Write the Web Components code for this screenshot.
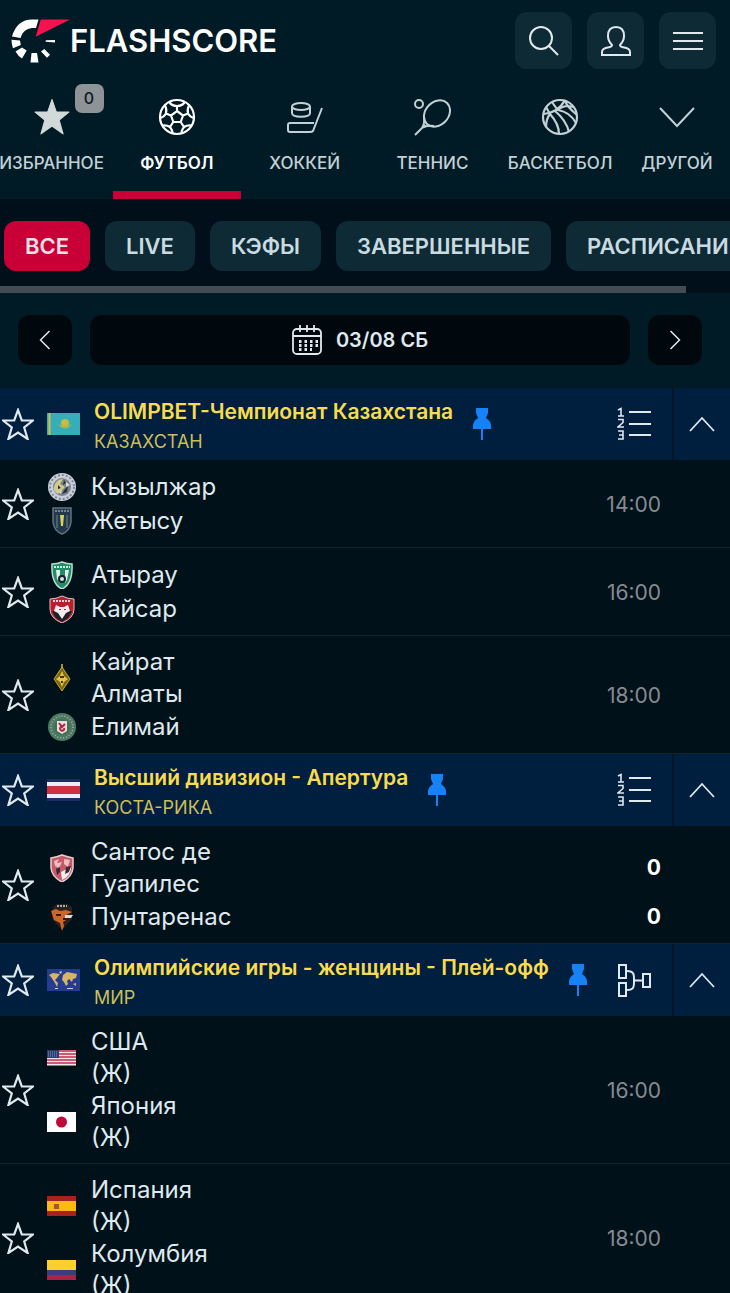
<!DOCTYPE html>
<html lang="ru">
<head>
<meta charset="utf-8">
<meta name="viewport" content="width=device-width, initial-scale=1">
<title>Flashscore</title>
<style>
  :root {
    --main-font: Inter, "Open Sans", "Noto Sans", sans-serif;
    --bar-color: #001b25;
    --page-color: #00111a;
    --league-color: #001e3e;
    --button-color: #0e2a35;
    --accent-color: #c80037;
    --font-color: #dfe9ee;
    --title-color: #f8dc4e;
    --line-color: #14232c;
  }
  body {
    margin: 0;
    overflow-x: hidden;
    background: var(--page-color);
    color: var(--font-color);
    font-family: var(--main-font);
  }
</style>
</head>
<body>
<site-header></site-header>

<sport-nav>
  <sport-tab icon="starFull" badge="0" class="first">ИЗБРАННОЕ</sport-tab>
  <sport-tab icon="football" active>ФУТБОЛ</sport-tab>
  <sport-tab icon="hockey">ХОККЕЙ</sport-tab>
  <sport-tab icon="tennis">ТЕННИС</sport-tab>
  <sport-tab icon="basketball">БАСКЕТБОЛ</sport-tab>
  <sport-tab icon="down">ДРУГОЙ</sport-tab>
</sport-nav>

<filter-bar>
  <filter-pill active>ВСЕ</filter-pill>
  <filter-pill>LIVE</filter-pill>
  <filter-pill>КЭФЫ</filter-pill>
  <filter-pill>ЗАВЕРШЕННЫЕ</filter-pill>
  <filter-pill>РАСПИСАНИЕ</filter-pill>
</filter-bar>

<date-switch>03/08 СБ</date-switch>

<main>
  <league-header flag="kazakhstan" table="list">OLIMPBET-Чемпионат Казахстана<span slot="country">КАЗАХСТАН</span></league-header>
  <match-row time="14:00">
    <team-line crest="kyzylzhar">Кызылжар</team-line>
    <team-line crest="zhetysu">Жетысу</team-line>
  </match-row>
  <match-row time="16:00">
    <team-line crest="atyrau">Атырау</team-line>
    <team-line crest="kaisar">Кайсар</team-line>
  </match-row>
  <match-row time="18:00">
    <team-line crest="kairat">Кайрат<br>Алматы</team-line>
    <team-line crest="elimai">Елимай</team-line>
  </match-row>

  <league-header flag="costarica" table="list">Высший дивизион - Апертура<span slot="country">КОСТА-РИКА</span></league-header>
  <match-row>
    <team-line crest="santos" score="0">Сантос де<br>Гуапилес</team-line>
    <team-line crest="puntarenas" score="0">Пунтаренас</team-line>
  </match-row>

  <league-header flag="world" table="bracket">Олимпийские игры - женщины - Плей-офф<span slot="country">МИР</span></league-header>
  <match-row time="16:00">
    <team-line crest="usa">США<br>(Ж)</team-line>
    <team-line crest="japan">Япония<br>(Ж)</team-line>
  </match-row>
  <match-row time="18:00">
    <team-line crest="spain">Испания<br>(Ж)</team-line>
    <team-line crest="colombia">Колумбия<br>(Ж)</team-line>
  </match-row>
</main>

<script>
"use strict";

// [width, height, viewBox, markup]
const line = 'fill="none" stroke="currentColor"';
const starPath = "M16 2 L19.8 12.3 L31 12.5 L22.2 19.5 L25.6 31 L16 24.5 L6.4 31 L9.8 19.5 L1 12.5 L12.2 12.3 Z";
const shield = "M2 4 Q8 4 14 1 Q20 4 26 4 V14 Q26 23 14 28 Q2 23 2 14 Z";

const icons = {
  logo: [60, 46, "0 0 60 46", `
    <path fill="#fff" d="M2 18.5 Q7 1.5 22 1.5 H28.5 L26 10 H22 Q13 11 10.5 20Z M1.5 21.8 L10 22.5 L10.8 27 L3 30.3 Q1.5 27 1.5 21.8Z M5.5 33.5 L12 29.5 L16.7 32.5 L12 40.5 Q8 38 5.5 33.5Z M21.5 35 H27 L28.5 44.5 H20.5Z M31 33.5 L34.3 31 L40 36.8 L37 39.8Z M35.7 22.3 L45 22 V24.4 L35.7 23.8Z"/>
    <path fill="#f5124f" d="M30.7 1.5 H60 L25.7 18.8 Z"/>`],
  search: [32, 32, "0 0 32 32", `<g ${line} stroke-width="2"><circle cx="13" cy="13" r="11"/><path d="M21 21 L30 30"/></g>`],
  user: [32, 32, "0 0 32 32", `<path ${line} stroke-width="2" d="M16 2 C10 2 8 6 8 11 C8 15 10 18 12 20 C12 24 2 21 2 27 V30 H30 V27 C30 21 20 24 20 20 C22 18 24 15 24 11 C24 6 22 2 16 2Z"/>`],
  menu: [30, 22, "0 0 30 22", `<path ${line} stroke-width="2" d="M0 3 H30 M0 11 H30 M0 19 H30"/>`],
  starFull: [36, 36, "0 0 32 32", `<path fill="#d2d9d9" stroke="#d2d9d9" stroke-linejoin="round" d="M16 .5 L19.8 11.5 L31 11.6 L22.4 18.7 L25.8 31 L16 24 L6.2 31 L9.6 18.7 L1 11.6 L12.2 11.5 Z"/>`],
  football: [38, 38, "0 0 38 38", `<g ${line} stroke-width="2.2"><circle cx="19" cy="19" r="17"/><path d="M19 13 L25 17.5 L22.7 24 H15.3 L13 17.5Z M19 13 V8 M25 17.5 L30 15.5 M22.7 24 L26 29 M15.3 24 L12 29 M13 17.5 L8 15.5 M11.5 4.5 Q14 8 19 8 Q24 8 26.5 4.5 M31 7.5 Q29 11 30 15.5 Q32 19 36 20 M33.5 27.5 Q29 27 26 29 Q23.5 32 23.5 35.5 M14.5 35.5 Q14.5 32 12 29 Q9 27 4.5 27.5 M2 20 Q6 19 8 15.5 Q9 11 7 7.5"/></g>`],
  hockey: [36, 36, "0 0 36 36", `<g ${line} stroke-width="2"><ellipse cx="14" cy="7.5" rx="9" ry="3.5"/><path d="M5 7.5 V14 C5 19 23 19 23 14 V7.5 M35 9 L26 32 Q25 33 23 33 H3 Q1 33 1 31 V26 Q1 24 3 24 H27"/></g>`],
  tennis: [38, 38, "0 0 38 38", `<g ${line} stroke-width="2"><circle cx="6" cy="6" r="4"/><ellipse cx="24" cy="15.5" rx="14.5" ry="11.5" transform="rotate(-46 24 15.5)"/><path d="M11 19 Q12 25 9 30 Q14 27 21 28 M9 30 L2 37 M10 26 L13 29"/></g>`],
  basketball: [38, 38, "0 0 38 38", `<g ${line} stroke-width="2.2"><circle cx="19" cy="19" r="17"/><path d="M2 16 Q17 15 24 2 M11 4 Q15 10 17 12 Q29 14 35 25 M14 13 Q25 22 28 34 M9 16 Q18 26 18 36 M9 16 Q5 21 5 29 M5 9 L9 16 M17 12 Q24 6 32 9 M24 2 Q25 8 36 17"/></g>`],
  down: [36, 36, "0 0 36 36", `<path ${line} stroke-width="2" d="M1 9 L18 27 L35 9"/>`],
  prev: [12, 20, "0 0 12 20", `<path ${line} stroke-width="1.5" d="M10.5 1 L1.5 10 L10.5 19"/>`],
  next: [12, 20, "0 0 12 20", `<path ${line} stroke-width="1.5" d="M1.5 1 L10.5 10 L1.5 19"/>`],
  calendar: [30, 30, "0 0 30 30", `<g ${line} stroke-width="1.8"><rect x="1" y="4" width="28" height="25" rx="4"/><path d="M1 11 H29 M8 0 V7 M15 0 V7 M22 0 V7"/><path stroke-width="3" stroke-dasharray="2.5 3" d="M7 16.5 H26 M7 20.5 H26 M7 24.5 H20"/></g>`],
  star: [32, 32, "0 0 32 32", `<path ${line} stroke-width="2.2" d="${starPath}"/>`],
  up: [26, 16, "0 0 26 16", `<path ${line} stroke-width="1.8" d="M1 15 L13 2 L25 15"/>`],
  pin: [20, 34, "0 0 20 34", `<path fill="#1583f5" d="M4 1 H16 V6 L14 11 Q19 14 19 19 V22 H1 V19 Q1 14 6 11 L4 6Z"/><path stroke="#1583f5" stroke-width="2" d="M10 22 V33"/>`],
  list: [34, 34, "0 0 34 34", `<g ${line} stroke-width="2"><path d="M12 5 H34 M12 17 H34 M12 28 H34"/><path stroke-width="1.6" d="M1 3 L4 1.5 V9 M1 9 H7 M1 12.5 H6 V15.5 L1 20 H7 M1 24 H6 V32 H1 M2 28 H6"/></g>`],
  bracket: [34, 34, "0 0 34 34", `<g ${line} stroke-width="2"><path d="M2 2 H9 V15 H2Z M2 20 H9 V33 H2Z M26 11 H33 V24 H26Z M10 8 C18 8 17 13 17 17.5 C17 22 18 27 10 27 M17 17.5 H26"/></g>`],

  kazakhstan: [33, 22, "0 0 33 22", `<path fill="#35aeb9" d="M0 0H33V22H0Z"/><path stroke="#d0c04a" stroke-width="2" d="M2.5 0V22"/><circle cx="18" cy="10" r="4" fill="#c5bd45"/><path d="M11 11 Q18 20 25 11 Q18 15 11 11" fill="#a9b74c"/>`],
  costarica: [33, 22, "0 0 33 22", `<path fill="#1c2c66" d="M0 0H33V22H0Z"/><path fill="#f1ecf3" d="M0 3H33V19H0Z"/><path fill="#cc3140" d="M0 7H33V15H0Z"/>`],
  world: [33, 22, "0 0 33 22", `<path fill="#253c91" d="M0 0H33V22H0Z"/><path fill="#d8b468" d="M2 6 L6 4 L13 5 L10 9 L8 11 L11 14 L10 18 L8 14 L6 11 L4 8Z M16 6 L20 3 L30 5 L29 9 L26 10 L25 13 L22 10 L20 12 L21 15 L19 17 L17 13 L15 11Z M26 15 L29 14 L29 17Z"/><path fill="#d8d7dc" d="M12 3 L15 2 L14 5Z M8 19H11V20H8Z M20 19H26V20H20Z"/>`],
  usa: [29, 16, "0 0 29 16", `<path fill="#eee7ed" d="M0 0H29V16H0Z"/><path stroke="#bf3049" stroke-width="1.5" d="M0 1H29M0 4H29M0 7H29M0 10H29M0 13H29M0 16H29"/><path fill="#273d70" d="M0 0H12V8H0Z"/><path stroke="#8492b7" stroke-dasharray="1 1" d="M1 2H11M1 4H11M1 6H11"/>`],
  japan: [29, 20, "0 0 29 20", `<path fill="#fff" d="M0 0H29V20H0Z"/><circle cx="14.5" cy="10" r="5.5" fill="#bd0838"/>`],
  spain: [29, 20, "0 0 29 20", `<path fill="#a9201d" d="M0 0H29V20H0Z"/><path fill="#fbb916" d="M0 5H29V15H0Z"/><path fill="#a6582b" d="M7 8H12V13H7Z"/>`],
  colombia: [29, 20, "0 0 29 20", `<path fill="#f8d130" d="M0 0H29V10H0Z"/><path fill="#3d3b7b" d="M0 10H29V15H0Z"/><path fill="#a92443" d="M0 15H29V20H0Z"/>`],

  kyzylzhar: [28, 28, "0 0 28 28", `<circle cx="14" cy="14" r="14" fill="#c9cfda"/><circle cx="14" cy="14" r="12" fill="none" stroke="#7b8698" stroke-width="2" stroke-dasharray="2 2"/><circle cx="14" cy="14" r="9" fill="#7d8288"/><path fill="#d1cc8b" d="M6 14 Q8 6 15 6 L12 11 L17 14 L10 21 Q5 18 6 14Z"/><path fill="#26313f" d="M16 7 L18 10 L15 12Z M20 13 L19 19 L14 21 L17 16Z M10 12 L13 15 L10 16Z"/><path fill="#d8dade" d="M18 9 L22 12 L18 14Z M11 19 L14 17 L13 21Z"/>`],
  zhetysu: [28, 28, "0 0 28 28", `<path fill="#20394b" stroke="#65727b" stroke-width="1.5" d="M5 1 H23 V15 Q22 24 14 27 Q6 24 5 15Z"/><path stroke="#77858f" stroke-width="2" stroke-dasharray="2 1" d="M7 4H21"/><path stroke="#718690" d="M9 8V21M19 8V21"/><path fill="#d9d35e" d="M12 8H16L15 19H13Z"/>`],
  atyrau: [28, 28, "0 0 28 28", `<path fill="#248b68" stroke="#b8ddcb" stroke-width="1.5" d="M4 3 Q9 3 14 1 Q19 3 24 3 Q25 23 14 28 Q3 23 4 3Z"/><path stroke="#d8eee3" stroke-width="2" stroke-dasharray="2 1" d="M6 6H22"/><path fill="#dfeee6" d="M8 9H12V22L9 18Z M17 9H21L19 19L17 22Z"/><circle cx="14" cy="18" r="4" fill="#17232b"/><circle cx="14" cy="18" r="2" fill="#d6e5df"/>`],
  kaisar: [28, 28, "0 0 28 28", `<path fill="#b91e2c" stroke="#e4c4c7" d="${shield}"/><path stroke="#ebd5d4" stroke-width="2" stroke-dasharray="2 1" d="M5 6H23"/><path fill="#1d2028" d="M4 16H24L20 23L14 27L8 23Z"/><path fill="#f2eef0" d="M8 10 L12 12 H16 L20 10 L22 16 L18 18 L14 24 L10 18 L6 16Z"/><path fill="#b91e2c" d="M11 14H13V15H11Z M16 14H18V15H16Z"/>`],
  kairat: [28, 28, "0 0 28 28", `<path fill="#7f6617" stroke="#c8a52a" d="M14 3 L22 15 L14 27 L6 15Z"/><path stroke="#d8bd48" stroke-width="1.5" d="M14 0V4"/><path fill="#e4c345" d="M14 7 L16 12 L20 15 L16 18 L14 23 L12 18 L8 15 L12 12Z"/><path fill="#3e3715" d="M12 12H16V14H12Z M13 17H15V19H13Z"/>`],
  elimai: [28, 28, "0 0 28 28", `<circle cx="14" cy="14" r="14" fill="#4d7962"/><circle cx="14" cy="14" r="11" fill="none" stroke="#a3bca9" stroke-width="1.5" stroke-dasharray="1 2"/><circle cx="14" cy="14" r="8" fill="#426e57"/><path fill="#e9dfdf" d="M9 8H19V18L14 21L9 18Z"/><path fill="none" stroke="#b8233c" stroke-width="2" d="M11 10 L14 14 L17 11 M13 14 A2 2 0 1 0 16 15"/>`],
  santos: [28, 28, "0 0 28 28", `<path fill="#c75a66" stroke="#e8cdd1" stroke-width="1.5" d="M3 4 Q9 3 14 1 Q20 3 25 4 V14 Q24 23 14 28 Q4 23 3 14Z"/><path fill="#edbec3" d="M6 7 L11 5 L9 9 L14 8 L11 14 L7 12Z M16 5 L22 6 L20 13 L16 10Z"/><path fill="#f2eef0" d="M13 18 L23 13 Q23 22 14 26Z"/><path fill="#362a38" d="M8 15L12 13L12 18L9 21Z M18 13L23 12L21 18L17 20Z"/>`],
  puntarenas: [28, 28, "0 0 28 28", `<path fill="#2a211f" d="M5 4 L9 1 H19 L24 4 V16 L14 27 L4 16Z"/><path stroke="#aaa" stroke-width="2" stroke-dasharray="2 1" d="M9 3H19"/><path fill="#cf6427" d="M3 8 L8 6 L12 8 L18 7 L24 9 L18 12 L20 16 L15 19 L16 23 L14 28 L12 20 L6 17Z"/><path fill="#dedbd7" d="M17 12H25L23 15H17Z"/><path fill="#291d1c" d="M8 11H13V13H8Z M15 15H20V17H15Z"/>`],
};

const icon = (name) => {
  const [w, h, box, body] = icons[name];
  return `<svg width="${w}" height="${h}" viewBox="${box}" aria-hidden="true">${body}</svg>`;
};

const resetStyles = `
  * { box-sizing: border-box; }
  svg { display: block; flex: none; }
  button {
    display: flex;
    align-items: center;
    justify-content: center;
    margin: 0;
    padding: 0;
    border: 0;
    background: none;
    color: inherit;
    font: inherit;
    cursor: pointer;
  }
  a { color: inherit; text-decoration: none; }
`;

class BaseElement extends HTMLElement {
  connectedCallback() {
    if (this.shadowRoot) return;
    this.attachShadow({ mode: "open" }).innerHTML = `<style>${resetStyles}</style>${this.render()}`;
  }
}

class SiteHeader extends BaseElement {
  render() {
    return `
    <style>
      :host { display: block; background: var(--bar-color); }
      header {
        display: flex;
        align-items: center;
        justify-content: space-between;
        padding: 12px 14px 12px 10px;
      }
      .logo {
        display: flex;
        align-items: center;
        color: #fff;
        font-size: 31px;
        font-weight: 600;
      }
      .actions { display: flex; gap: 15px; }
      button {
        width: 57px;
        height: 57px;
        border-radius: 12px;
        background: var(--button-color);
      }
    </style>
    <header>
      <a class="logo" href="#">${icon("logo")}<span>FLASHSCORE</span></a>
      <div class="actions">
        <button type="button" aria-label="Поиск">${icon("search")}</button>
        <button type="button" aria-label="Профиль">${icon("user")}</button>
        <button type="button" aria-label="Меню">${icon("menu")}</button>
      </div>
    </header>`;
  }
}

class SportNav extends BaseElement {
  render() {
    return `
    <style>
      :host { display: block; background: var(--bar-color); }
      nav {
        display: grid;
        grid-template-columns: 113px repeat(4, 1fr) 106px;
      }
      ::slotted(.first) { padding-right: 10px; }
    </style>
    <nav><slot></slot></nav>`;
  }
}

class SportTab extends BaseElement {
  render() {
    const badge = this.getAttribute("badge");
    return `
    <style>
      :host { display: block; color: #c3d0d5; }
      a {
        display: flex;
        flex-direction: column;
        align-items: center;
        height: 118px;
        padding-top: 17px;
        border-bottom: 8px solid transparent;
        font-size: 17px;
        font-weight: 500;
        line-height: 20px;
        white-space: nowrap;
      }
      .icon {
        display: flex;
        align-items: center;
        height: 38px;
        margin-bottom: 17px;
        position: relative;
      }
      .badge {
        position: absolute;
        left: 41px;
        top: -14px;
        width: 29px;
        border-radius: 7px;
        background: #8e9397;
        color: #101820;
        font-size: 16px;
        line-height: 29px;
        text-align: center;
      }
      :host([active]) { color: #fff; }
      :host([active]) a { border-color: var(--accent-color); font-weight: 600; }
    </style>
    <a href="#">
      <span class="icon">${icon(this.getAttribute("icon"))}${badge ? `<span class="badge">${badge}</span>` : ""}</span>
      <span><slot></slot></span>
    </a>`;
  }
}

class FilterBar extends BaseElement {
  render() {
    return `
    <style>
      :host { display: block; overflow: hidden; background: #000f1a; }
      .pills { display: flex; gap: 15px; padding: 22px 4px 15px; }
      .thumb { width: 94%; height: 7px; background: #444c53; }
    </style>
    <div class="pills"><slot></slot></div>
    <div class="thumb"></div>`;
  }
}

class FilterPill extends BaseElement {
  render() {
    return `
    <style>
      :host { display: block; flex: none; }
      button {
        height: 50px;
        padding: 0 21px;
        border-radius: 12px;
        background: var(--button-color);
        color: #c9dbe1;
        font-size: 22px;
        font-weight: 600;
      }
      :host([active]) button { background: var(--accent-color); color: #f6dfe7; }
    </style>
    <button type="button"><slot></slot></button>`;
  }
}

class DateSwitch extends BaseElement {
  render() {
    return `
    <style>
      :host {
        display: flex;
        gap: 18px;
        padding: 22px 28px 23px 18px;
        background: var(--bar-color);
      }
      button {
        width: 54px;
        height: 50px;
        border-radius: 12px;
        background: #00080e;
      }
      .date {
        flex: 1;
        gap: 14px;
        font-size: 20px;
        font-weight: 600;
      }
    </style>
    <button type="button" aria-label="Назад">${icon("prev")}</button>
    <button type="button" class="date">${icon("calendar")}<span><slot></slot></span></button>
    <button type="button" aria-label="Вперед">${icon("next")}</button>`;
  }
}

class LeagueHeader extends BaseElement {
  render() {
    return `
    <style>
      :host {
        display: flex;
        align-items: center;
        height: 72px;
        background: var(--league-color);
      }
      .star { width: 36px; }
      .flag { margin: 0 14px 0 11px; }
      .title {
        padding-top: 5px;
        color: var(--title-color);
        font-size: 21px;
        font-weight: 600;
        line-height: 30px;
        white-space: nowrap;
      }
      .country { display: block; color: #cdbf58; font-size: 18px; font-weight: 400; }
      .pin { margin-left: 19px; }
      .table { margin: 0 21px 0 auto; }
      .toggle {
        align-self: stretch;
        width: 58px;
        border-left: 2px solid #00142b;
      }
    </style>
    <button type="button" class="star" aria-label="В избранное">${icon("star")}</button>
    <span class="flag">${icon(this.getAttribute("flag"))}</span>
    <a class="title" href="#"><slot></slot><span class="country"><slot name="country"></slot></span></a>
    <button type="button" class="pin" aria-label="Закрепить">${icon("pin")}</button>
    <button type="button" class="table" aria-label="Таблица">${icon(this.getAttribute("table"))}</button>
    <button type="button" class="toggle" aria-label="Свернуть">${icon("up")}</button>`;
  }
}

class MatchRow extends BaseElement {
  render() {
    const time = this.getAttribute("time");
    return `
    <style>
      :host {
        display: flex;
        align-items: center;
        padding: 10px 69px 9px 0;
        border-bottom: 1px solid var(--line-color);
      }
      .star { width: 36px; }
      .teams { flex: 1; }
      time { color: #858b91; font-size: 21px; }
    </style>
    <button type="button" class="star" aria-label="В избранное">${icon("star")}</button>
    <div class="teams"><slot></slot></div>
    ${time ? `<time>${time}</time>` : ""}`;
  }
}

class TeamLine extends BaseElement {
  render() {
    const score = this.getAttribute("score");
    return `
    <style>
      :host {
        display: flex;
        align-items: center;
        min-height: 34px;
        font-size: 24px;
        line-height: 32px;
      }
      .crest {
        display: flex;
        justify-content: center;
        width: 29px;
        margin: 0 15px 0 11px;
      }
      .score {
        margin-left: auto;
        color: #fff;
        font-size: 21px;
        font-weight: 700;
      }
    </style>
    <span class="crest">${icon(this.getAttribute("crest"))}</span>
    <span><slot></slot></span>
    ${score ? `<span class="score">${score}</span>` : ""}`;
  }
}

customElements.define("site-header", SiteHeader);
customElements.define("sport-nav", SportNav);
customElements.define("sport-tab", SportTab);
customElements.define("filter-bar", FilterBar);
customElements.define("filter-pill", FilterPill);
customElements.define("date-switch", DateSwitch);
customElements.define("league-header", LeagueHeader);
customElements.define("match-row", MatchRow);
customElements.define("team-line", TeamLine);
</script>
</body>
</html>
